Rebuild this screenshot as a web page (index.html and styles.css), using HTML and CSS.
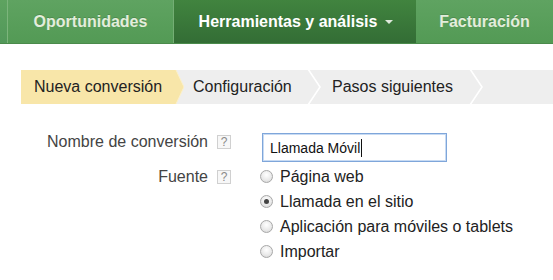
FILE: index.html
```html
<!DOCTYPE html>
<html lang="es">
<head>
<meta charset="utf-8">
<title>Nueva conversión</title>
<link rel="stylesheet" href="styles.css">
</head>
<body>
<nav class="topnav">
  <div class="nav-stub"></div>
  <a class="nav-tab nav-tab-light nav-tab-first">Oportunidades</a>
  <a class="nav-tab nav-tab-active">Herramientas y análisis <span class="caret"></span></a>
  <a class="nav-tab nav-tab-light nav-tab-last">Facturación</a>
</nav>

<div class="steps">
  <div class="step step-current">Nueva conversión</div>
  <svg class="step-arrow" width="9" height="34" viewBox="0 0 9 34"><polygon points="0,0 1,0 9,17 1,34 0,34" fill="#f8e6a9"/><polyline points="1,0 9,17 1,34" fill="none" stroke="#fbf0cc" stroke-width="1"/></svg>
  <div class="step step-two">Configuración</div>
  <svg class="step-chev" width="14" height="34" viewBox="0 0 14 34"><polyline points="1,-1 13,17 1,35" fill="none" stroke="#ffffff" stroke-width="1.6"/></svg>
  <div class="step step-three">Pasos siguientes</div>
  <svg class="step-chev" width="14" height="34" viewBox="0 0 14 34"><polyline points="1,-1 13,17 1,35" fill="none" stroke="#ffffff" stroke-width="1.6"/></svg>
  <div class="step step-rest"></div>
</div>

<form class="form">
  <label class="form-label row-name">Nombre de conversión</label>
  <span class="help row-name">?</span>
  <div class="form-control row-name">
    <div class="text-input">Llamada Móvil<span class="text-caret"></span></div>
  </div>

  <label class="form-label row-source">Fuente</label>
  <span class="help row-source">?</span>
  <div class="form-control row-source options">
    <div class="option"><span class="radio"></span>Página web</div>
    <div class="option"><span class="radio radio-checked"></span>Llamada en el sitio</div>
    <div class="option"><span class="radio"></span>Aplicación para móviles o tablets</div>
    <div class="option"><span class="radio"></span>Importar</div>
  </div>
</form>
</body>
</html>
```

FILE: styles.css
```css
html, body {
  margin: 0;
  padding: 0;
  background: #ffffff;
  font-family: "Liberation Sans", Arial, Helvetica, sans-serif;
  width: 553px;
  height: 280px;
  overflow: hidden;
}

.topnav {
  display: flex;
  height: 43px;
  background: #569c57;
  border-bottom: 1px solid #4a8a4b;
}

.nav-stub {
  width: 7px;
  background: linear-gradient(#5ea360, #52985a);
  border-right: 1px solid #7cb57c;
}

.nav-tab {
  display: flex;
  align-items: center;
  justify-content: center;
  font-weight: bold;
  font-size: 16px;
  text-decoration: none;
  box-sizing: border-box;
}

.nav-tab-light {
  background: linear-gradient(#5fa361, #539a55);
  color: #e3eddc;
  text-shadow: 0 -1px 0 rgba(0, 0, 0, 0.15);
}

.nav-tab-first {
  width: 166px;
  border-right: 1px solid #74ae74;
}

.nav-tab-active {
  width: 242px;
  background: linear-gradient(#41843f, #336d35);
  color: #ffffff;
  padding-left: 2px;
}

.nav-tab-last {
  flex: 1;
}

.caret {
  display: inline-block;
  width: 0;
  height: 0;
  margin-left: 8px;
  border-left: 4px solid transparent;
  border-right: 4px solid transparent;
  border-top: 4px solid #dfe9dc;
  vertical-align: middle;
}

.steps {
  display: flex;
  margin: 26px 0 0 21px;
  height: 34px;
  background: #eeeeee;
  font-size: 16px;
  color: #222222;
}

.step {
  display: flex;
  align-items: center;
  box-sizing: border-box;
}

.step-current {
  width: 154px;
  padding-left: 13px;
  background: #f8e6a9;
}

.step-arrow, .step-chev {
  display: block;
  flex: none;
}

.step-two {
  width: 123px;
  padding-left: 9px;
}

.step-three {
  width: 148px;
  padding-left: 11px;
}

.step-rest {
  flex: 1;
}

.form {
  display: grid;
  grid-template-columns: 208px 14px 1fr;
  column-gap: 9px;
  margin-top: 29px;
  font-size: 16px;
  color: #444444;
}

.form > .form-control {
  margin-left: 20px;
}

.form-label {
  text-align: right;
  align-self: start;
}

.row-name.form-label {
  line-height: 18px;
}

.row-name.help {
  margin-top: 2px;
}

.row-source {
  margin-top: 2px;
}

.row-source.form-label {
  line-height: 25px;
}

.row-source.help {
  margin-top: 8px;
}

.help {
  display: flex;
  align-items: center;
  justify-content: center;
  width: 14px;
  height: 14px;
  box-sizing: border-box;
  border: 1px solid #d0d0d0;
  background: #f7f7f7;
  color: #8a8a8a;
  font-size: 12px;
  line-height: 1;
  align-self: start;
}

.text-input {
  width: 185px;
  height: 29px;
  box-sizing: border-box;
  border: 1px solid #7fa6da;
  box-shadow: inset 0 0 0 1px #c8dbf3;
  padding: 0 0 0 7px;
  margin-left: 2px;
  display: flex;
  align-items: center;
  font-size: 14px;
  color: #111111;
}

.text-caret {
  display: inline-block;
  width: 1px;
  height: 18px;
  background: #111111;
  margin-left: 1px;
}

.options {
  display: flex;
  flex-direction: column;
}

.option {
  display: flex;
  align-items: center;
  height: 25px;
  color: #222222;
}

.radio {
  width: 13px;
  height: 13px;
  box-sizing: border-box;
  border-radius: 50%;
  border: 1px solid #a8a8a8;
  background: radial-gradient(circle at 50% 35%, #ffffff 0%, #e8e8e8 60%, #d0d0d0 100%);
  margin-right: 7px;
  position: relative;
  flex: none;
}

.radio-checked::after {
  content: "";
  position: absolute;
  left: 3px;
  top: 3px;
  width: 5px;
  height: 5px;
  border-radius: 50%;
  background: #444444;
}
```
